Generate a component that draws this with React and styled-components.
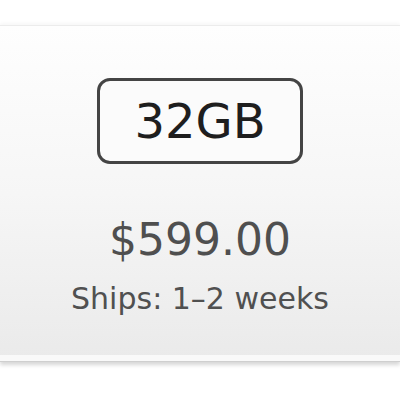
import React from "react";
import styled, { createGlobalStyle } from "styled-components";

const Global = createGlobalStyle`
  html, body { margin: 0; padding: 0; background: #ffffff; }
  body { font-family: "DejaVu Sans", "Liberation Sans", sans-serif; }
`;

const Page = styled.div`
  width: 400px;
  height: 400px;
  padding-top: 25px;
  box-sizing: border-box;
  background: #ffffff;
`;

const Card = styled.div`
  height: 336px;
  box-sizing: border-box;
  border-top: 1px solid #ececec;
  box-shadow: 0 -2px 3px rgba(0,0,0,0.03), inset 0 -6px 0 #f9f9f9, 0 1px 0 #cfcfcf, 0 4px 4px rgba(0,0,0,0.16);
  background: linear-gradient(to bottom, #fefefe 0%, #f6f6f6 50%, #eaeaea 100%);
  display: flex;
  flex-direction: column;
  align-items: center;
  padding-top: 52px;
`;

const SizeButton = styled.div`
  width: 206px;
  height: 86px;
  box-sizing: border-box;
  border: 3px solid #444;
  border-radius: 13px;
  background: #fbfbfb;
  display: flex;
  align-items: center;
  justify-content: center;
  font-size: 48px;
  color: #1e1e1e;
`;

const Price = styled.div`
  margin-top: 51px;
  font-size: 44px;
  line-height: 50px;
  color: #4f4f4f;
`;

const Ships = styled.div`
  margin-top: 16px;
  font-size: 30px;
  line-height: 36px;
  color: #505050;
`;

export default function App() {
  return (
    <>
      <Global />
      <Page>
        <Card>
          <SizeButton>32GB</SizeButton>
          <Price>$599.00</Price>
          <Ships>Ships: 1–2 weeks</Ships>
        </Card>
      </Page>
    </>
  );
}
